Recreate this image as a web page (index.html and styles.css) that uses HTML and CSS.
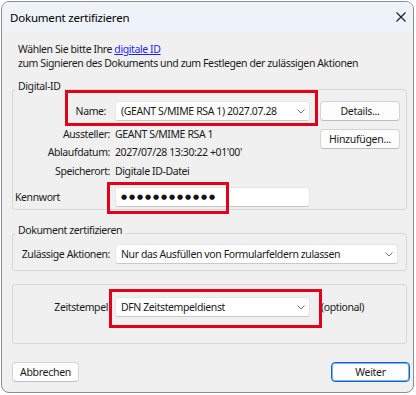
FILE: index.html
```html
<!DOCTYPE html>
<html lang="de">
<head>
<meta charset="utf-8">
<title>Dokument zertifizieren</title>
<link rel="stylesheet" href="styles.css">
</head>
<body>
<div class="window">
  <div class="titlebar">
    <span class="title">Dokument zertifizieren</span>
    <svg class="close" width="10" height="10" viewBox="0 0 10 10"><path d="M0.5 0.5 L9.5 9.5 M9.5 0.5 L0.5 9.5" stroke="#1a1a1a" stroke-width="1.1" fill="none"/></svg>
  </div>
  <div class="content">
    <p class="intro">Wählen Sie bitte Ihre <a href="#" class="link">digitale ID</a><br>zum Signieren des Dokuments und zum Festlegen der zulässigen Aktionen</p>

    <fieldset class="group">
      <legend>Digital-ID</legend>
      <div class="id-grid">
        <div class="lbl lbl-name">Name:</div>
        <div class="combo combo-name"><span>(GEANT S/MIME RSA 1) 2027.07.28</span><svg class="chev" width="8" height="5" viewBox="0 0 8 5"><polyline points="0.5,0.5 4,4 7.5,0.5" fill="none" stroke="#6e6e6e" stroke-width="1"/></svg></div>
        <div class="btn-col">
          <button class="btn btn-side">Details...</button>
          <button class="btn btn-side">Hinzufügen...</button>
        </div>
        <div class="lbl row2">Aussteller:</div>
        <div class="val row2">GEANT S/MIME RSA 1</div>
        <div class="lbl row3">Ablaufdatum:</div>
        <div class="val row3">2027/07/28 13:30:22 +01'00'</div>
        <div class="lbl row4">Speicherort:</div>
        <div class="val row4">Digitale ID-Datei</div>
        <div class="lbl-left row5">Kennwort</div>
        <div class="pwd row5"><span class="dots">●●●●●●●●●●●●</span></div>
      </div>
    </fieldset>

    <fieldset class="group group2">
      <legend>Dokument zertifizieren</legend>
      <div class="row-flex">
        <div class="lbl lbl-flex">Zulässige Aktionen:</div>
        <div class="combo combo-wide"><span>Nur das Ausfüllen von Formularfeldern zulassen</span><svg class="chev" width="8" height="5" viewBox="0 0 8 5"><polyline points="0.5,0.5 4,4 7.5,0.5" fill="none" stroke="#6e6e6e" stroke-width="1"/></svg></div>
      </div>
    </fieldset>

    <div class="ts-box">
      <div class="lbl lbl-ts">Zeitstempel</div>
      <div class="combo combo-ts"><span>DFN Zeitstempeldienst</span><svg class="chev" width="8" height="5" viewBox="0 0 8 5"><polyline points="0.5,0.5 4,4 7.5,0.5" fill="none" stroke="#6e6e6e" stroke-width="1"/></svg></div>
      <div class="optional">(optional)</div>
    </div>

    <div class="footer">
      <button class="btn btn-cancel">Abbrechen</button>
      <button class="btn btn-primary">Weiter</button>
    </div>
  </div>

  <div class="mark mark-name"></div>
  <div class="mark mark-pwd"></div>
  <div class="mark mark-ts"></div>
</div>
</body>
</html>
```

FILE: styles.css
```css
* { box-sizing: border-box; }

body {
  margin: 0;
  background: #ffffff;
  font-family: "Noto Sans", "Open Sans", sans-serif;
  font-size: 10.5px;
  letter-spacing: -0.4px;
  color: #1b1b1b;
}

.window {
  margin: 1px 0 0 1px;
  width: 413px;
  height: 392px;
  border: 1px solid #8e8e8e;
  border-radius: 8px;
  background: #f0f0f0;
  overflow: hidden;
  position: relative;
  display: flex;
  flex-direction: column;
}

.titlebar {
  height: 30px;
  flex: none;
  background: #eef2f9;
  display: flex;
  align-items: center;
  justify-content: space-between;
  padding: 0 7px 0 8px;
  font-size: 11.5px;
  letter-spacing: -0.2px;
  color: #000;
}

.close { display: block; margin-top: -1px; }

.content {
  flex: 1;
  display: flex;
  flex-direction: column;
  padding: 10px 6px 0 10px;
}

.intro {
  margin: 0;
  padding-left: 6px;
  line-height: 14px;
}

.link { color: #1f1fff; text-decoration: underline; }

.group {
  margin: 9px 0 0 0;
  padding: 1px 0 2px 0;
  border: 1px solid #d8d8d8;
  border-radius: 3px;
  min-width: 0;
}

.group legend {
  margin-left: 2px;
  padding: 0 3px 7px;
  line-height: 14px;
}

.group2 { margin-top: 13px; padding: 0 0 6px 0; }

.id-grid {
  display: grid;
  grid-template-columns: 102px 205px 80px;
  grid-template-rows: 24px 18px 19px 25px 20px;
}

.lbl {
  text-align: right;
  padding-right: 5px;
  line-height: 18px;
  white-space: nowrap;
}

.lbl-name { grid-row: 1; grid-column: 1; line-height: 20px; padding-right: 9px; align-self: start; }
.combo-name { grid-row: 1; grid-column: 2; width: 195px; align-self: start; }

.btn-col {
  grid-column: 3;
  grid-row: 1 / span 4;
  display: flex;
  flex-direction: column;
  gap: 8px;
}

.val { line-height: 18px; white-space: nowrap; }
.row2 { grid-row: 2; }
.row3 { grid-row: 3; line-height: 19px; }
.row4 { grid-row: 4; align-self: start; }
.row5 { grid-row: 5; }
.lbl.row2, .lbl.row3, .lbl.row4 { grid-column: 1; }
.val.row2, .val.row3, .val.row4 { grid-column: 2; }

.lbl-left { grid-column: 1; line-height: 20px; padding-left: 2px; }

.pwd {
  grid-column: 2;
  width: 195px;
  height: 20px;
  background: #fff;
  border: 1px solid #e6e6e6;
  border-bottom-color: #c9c9c9;
  border-radius: 3px;
  display: flex;
  align-items: center;
  padding-left: 5px;
}

.dots {
  font-family: "DejaVu Sans", sans-serif;
  font-size: 7px;
  letter-spacing: 1.9px;
  color: #111;
}

.combo {
  height: 20px;
  background: #fff;
  border: 1px solid #e6e6e6;
  border-bottom-color: #c9c9c9;
  border-radius: 3px;
  display: flex;
  align-items: center;
  justify-content: space-between;
  padding: 0 4px 0 5px;
  white-space: nowrap;
}

.chev { display: block; flex: none; }

.row-flex { display: flex; align-items: center; }
.lbl-flex { width: 102px; line-height: 20px; }
.combo-wide { width: 283px; }

.ts-box {
  margin-top: 13px;
  height: 60px;
  border: 1px solid #d8d8d8;
  border-radius: 3px;
  padding-top: 12px;
  display: flex;
  align-items: flex-start;
}

.lbl-ts { width: 102px; padding-right: 7px; line-height: 20px; }
.combo-ts { width: 195px; }
.optional { margin-left: 11px; line-height: 20px; }

.footer {
  margin-top: 18px;
  margin-right: -3px;
  display: flex;
  justify-content: space-between;
}

.btn {
  height: 20px;
  padding: 0;
  background: #fdfdfd;
  border: 1px solid #d3d3d3;
  border-bottom-color: #bdbdbd;
  border-radius: 4px;
  font-family: inherit;
  font-size: 10.5px;
  letter-spacing: -0.3px;
  color: #1b1b1b;
  line-height: 18px;
}

.btn-side { width: 80px; }
.btn-cancel { width: 67px; }
.btn-primary {
  width: 79px;
  border: 1px solid #0b67c9;
  box-shadow: inset 0 0 0 1px #7fb2ea;
}

.mark {
  position: absolute;
  border: 3px solid #e2001a;
}
.mark-name { left: 63px; top: 88px; width: 253px; height: 36px; }
.mark-pwd { left: 105px; top: 180px; width: 122px; height: 32px; }
.mark-ts { left: 107px; top: 287px; width: 213px; height: 39px; }
```
